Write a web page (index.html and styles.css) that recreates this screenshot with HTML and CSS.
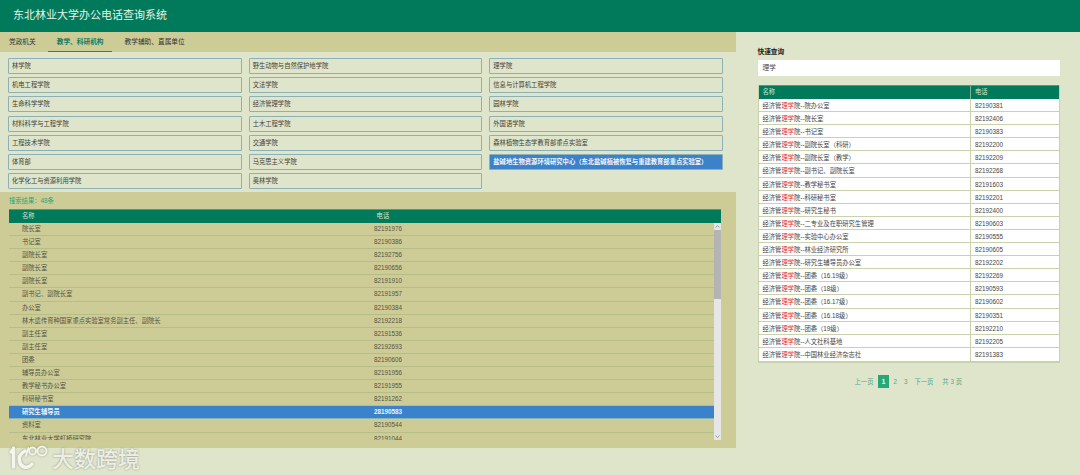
FILE: index.html
```html
<!DOCTYPE html>
<html lang="zh-CN">
<head>
<meta charset="utf-8">
<title>东北林业大学办公电话查询系统</title>
<link rel="stylesheet" href="styles.css">
</head>
<body>
<header class="top">东北林业大学办公电话查询系统</header>
<div class="page">
  <main class="left">
    <nav class="tabs">
      <a class="tab">党政机关</a>
      <a class="tab active">教学、科研机构</a>
      <a class="tab">教学辅助、直属单位</a>
    </nav>
    <section class="units">
      <a class="unit">林学院</a>
      <a class="unit">野生动物与自然保护地学院</a>
      <a class="unit">理学院</a>
      <a class="unit">机电工程学院</a>
      <a class="unit">文法学院</a>
      <a class="unit">信息与计算机工程学院</a>
      <a class="unit">生命科学学院</a>
      <a class="unit">经济管理学院</a>
      <a class="unit">园林学院</a>
      <a class="unit">材料科学与工程学院</a>
      <a class="unit">土木工程学院</a>
      <a class="unit">外国语学院</a>
      <a class="unit">工程技术学院</a>
      <a class="unit">交通学院</a>
      <a class="unit">森林植物生态学教育部重点实验室</a>
      <a class="unit">体育部</a>
      <a class="unit">马克思主义学院</a>
      <a class="unit selected">盐碱地生物资源环境研究中心（东北盐碱植被恢复与重建教育部重点实验室）</a>
      <a class="unit">化学化工与资源利用学院</a>
      <a class="unit">奥林学院</a>
    </section>
    <section class="results">
      <p class="count">搜索结果：48条</p>
      <div class="list-head"><span>名称</span><span class="list-head-tel">电话</span></div>
      <div class="list-body">
        <div class="list-rows">
          <div class="row"><span>院长室</span><span>82191976</span></div>
          <div class="row"><span>书记室</span><span>82190386</span></div>
          <div class="row"><span>副院长室</span><span>82192756</span></div>
          <div class="row"><span>副院长室</span><span>82190656</span></div>
          <div class="row"><span>副院长室</span><span>82191910</span></div>
          <div class="row"><span>副书记、副院长室</span><span>82191957</span></div>
          <div class="row"><span>办公室</span><span>82190384</span></div>
          <div class="row"><span>林木遗传育种国家重点实验室常务副主任、副院长</span><span>82192218</span></div>
          <div class="row"><span>副主任室</span><span>82191536</span></div>
          <div class="row"><span>副主任室</span><span>82192693</span></div>
          <div class="row"><span>团委</span><span>82190606</span></div>
          <div class="row"><span>辅导员办公室</span><span>82191956</span></div>
          <div class="row"><span>教学秘书办公室</span><span>82191955</span></div>
          <div class="row"><span>科研秘书室</span><span>82191262</span></div>
          <div class="row current"><span>研究生辅导员</span><span>28190583</span></div>
          <div class="row"><span>资料室</span><span>82190544</span></div>
          <div class="row"><span>东北林业大学虹桥研究院</span><span>82191044</span></div>
        </div>
        <div class="scrollbar">
          <svg class="arrow" viewBox="0 0 7 7"><path d="M1.5 4.5 3.5 2.5 5.5 4.5" fill="none" stroke="#8a8a8a" stroke-width=".8"/></svg>
          <div class="thumb"></div>
          <div class="track"></div>
          <svg class="arrow" viewBox="0 0 7 7"><path d="M1.5 2.5 3.5 4.5 5.5 2.5" fill="none" stroke="#8a8a8a" stroke-width=".8"/></svg>
        </div>
      </div>
    </section>
  </main>
  <aside class="right">
    <h2 class="quick">快速查询</h2>
    <div class="search">理学</div>
    <div class="table">
      <div class="thead"><span>名称</span><span>电话</span></div>
      <div class="trow"><span>经济管<em>理学</em>院--院办公室</span><span>82190381</span></div>
      <div class="trow"><span>经济管<em>理学</em>院--院长室</span><span>82192406</span></div>
      <div class="trow"><span>经济管<em>理学</em>院--书记室</span><span>82190383</span></div>
      <div class="trow"><span>经济管<em>理学</em>院--副院长室（科研）</span><span>82192200</span></div>
      <div class="trow"><span>经济管<em>理学</em>院--副院长室（教学）</span><span>82192209</span></div>
      <div class="trow"><span>经济管<em>理学</em>院--副书记、副院长室</span><span>82192268</span></div>
      <div class="trow"><span>经济管<em>理学</em>院--教学秘书室</span><span>82191603</span></div>
      <div class="trow"><span>经济管<em>理学</em>院--科研秘书室</span><span>82192201</span></div>
      <div class="trow"><span>经济管<em>理学</em>院--研究生秘书</span><span>82192400</span></div>
      <div class="trow"><span>经济管<em>理学</em>院--二专业及在职研究生管理</span><span>82190603</span></div>
      <div class="trow"><span>经济管<em>理学</em>院--实验中心办公室</span><span>82190555</span></div>
      <div class="trow"><span>经济管<em>理学</em>院--林业经济研究所</span><span>82190605</span></div>
      <div class="trow"><span>经济管<em>理学</em>院--研究生辅导员办公室</span><span>82192202</span></div>
      <div class="trow"><span>经济管<em>理学</em>院--团委（16.19级）</span><span>82192269</span></div>
      <div class="trow"><span>经济管<em>理学</em>院--团委（18级）</span><span>82190593</span></div>
      <div class="trow"><span>经济管<em>理学</em>院--团委（16.17级）</span><span>82190602</span></div>
      <div class="trow"><span>经济管<em>理学</em>院--团委（16.18级）</span><span>82190351</span></div>
      <div class="trow"><span>经济管<em>理学</em>院--团委（19级）</span><span>82192210</span></div>
      <div class="trow"><span>经济管<em>理学</em>院--人文社科基地</span><span>82192205</span></div>
      <div class="trow"><span>经济管<em>理学</em>院--中国林业经济杂志社</span><span>82191383</span></div>
    </div>
    <div class="pager">
      <a>上一页</a>
      <a class="page-on">1</a>
      <a class="page-num">2</a>
      <a class="page-num">3</a>
      <a>下一页</a>
      <a class="page-total">共 3 页</a>
    </div>
  </aside>
</div>
<div class="watermark">
  <svg class="wm-logo" viewBox="0 0 40 28" aria-hidden="true">
    <g fill="none" stroke="#f4f5ee" stroke-width="3.4" stroke-linecap="round">
      <path d="M5 7 3 9M5.500 5V24"/>
      <path d="M17 8C11.500 11 10 15 12 20C14 25 20 26 24 21"/>
      <path d="M18 13C18.500 10 19.500 7 20.500 5" stroke-width="1.800"/>
      <circle cx="24.500" cy="8" r="3.500" stroke-width="1.800"/>
      <circle cx="34" cy="8" r="4.500" stroke-width="1.800"/>
    </g>
  </svg>
  <span class="wm-text">大数跨境</span>
</div>
</body>
</html>
```
FILE: styles.css
```css
* { box-sizing: border-box; }
html, body { margin: 0; height: 475px; overflow: hidden; }
body {
  position: relative;
  background: #dfe5cb;
  color: #3a3a30;
  font: 6.3px/1 "Liberation Sans", "Noto Sans CJK SC", sans-serif;
}
.top {
  height: 32px;
  padding: 9px 0 0 13px;
  background: #007a5a;
  color: #e6f2e8;
  font-size: 11px;
  line-height: 13px;
  font-family: "Liberation Serif", "Noto Sans CJK SC", serif;
}
.page { display: flex; align-items: flex-start; }
.left { width: 735.5px; flex: none; }
.tabs {
  display: flex;
  gap: 4px;
  height: 20px;
  padding-left: .5px;
  background: #cdcc97;
}
.tab {
  height: 20px;
  padding: 0 8.500px;
  line-height: 19px;
  font-size: 6.700px;
  color: #333;
}
.tab.active {
  color: #157a5c;
  font-weight: bold;
  border-bottom: 1px solid #1f8a68;
}
.units {
  display: grid;
  grid-template-columns: repeat(3, 233.670px);
  grid-auto-rows: 16px;
  gap: 3.200px 7px;
  height: 140px;
  padding: 6px 0 0 8px;
}
.unit {
  padding-left: 3px;
  border: 1px solid #8db0b4;
  border-radius: 1px;
  line-height: 14px;
  color: #3f4036;
}
.unit.selected {
  border-color: #8db0b4;
  background: #3c82ca;
  color: #f2f6fa;
  font-weight: bold;
}
.results {
  height: 256px;
  padding: 0 15px 0 9px;
  background: #cdcc97;
}
.count {
  height: 17px;
  margin: 0;
  padding-top: 5px;
  color: #25a878;
  font-size: 6.300px;
  line-height: 7px;
}
.list-head {
  display: flex;
  height: 14px;
  padding-left: 13px;
  background: #007a5a;
  border-top: 1px solid #4e9c7b;
  color: #cfe6d4;
  line-height: 12px;
}
.list-head-tel { margin-left: 342px; }
.list-body { display: flex; height: 217px; overflow: hidden; }
.list-rows { flex: 1; }
.row {
  display: grid;
  grid-template-columns: 352px 1fr;
  height: 13.100px;
  padding-left: 13px;
  border-bottom: 1px solid #b6bd87;
  line-height: 12.500px;
  color: #55533f;
}
.row.current {
  background: #3c82ca;
  color: #eef4fa;
  font-weight: bold;
  border-bottom-color: #84b8b8;
}
.scrollbar {
  display: flex;
  flex-direction: column;
  flex: none;
  width: 7px;
  background: #e6e6e6;
}
.arrow { display: block; width: 7px; height: 7px; flex: none; }
.thumb { height: 69px; flex: none; background: #b4b4b4; }
.track { flex: 1; }
.right { flex: 1; padding: 0 20px 0 22px; }
.quick {
  height: 28px;
  margin: 0;
  padding-top: 15.500px;
  color: #222;
  font-size: 6.700px;
  line-height: 8px;
  font-weight: bold;
}
.search {
  height: 16px;
  padding-left: 5px;
  background: #fff;
  color: #444;
  font-size: 6.700px;
  line-height: 16px;
}
.table {
  margin-top: 9px;
  background: #fff;
  border: 1px solid #c9d2ad;
  border-top: 0;
  border-bottom: 2px solid #c9d2ad;
}
.thead, .trow {
  display: grid;
  grid-template-columns: 211.500px 1fr;
  color: #444;
}
.thead span, .trow span { padding-left: 4px; }
.thead {
  height: 14px;
  background: #007a5a;
  border-top: 1px solid #4e9c7b;
  color: #cfe6d4;
  line-height: 11.500px;
}
.thead span + span { border-left: 1px solid #7fb09a; }
.trow {
  height: 13.100px;
  border-bottom: 1px solid #c9d2ad;
  line-height: 13px;
}
.trow:last-child { border-bottom: 0; }
.trow span + span { border-left: 1px solid #c9d2ad; }
em { color: #e8262c; font-style: normal; }
.pager {
  display: flex;
  justify-content: center;
  align-items: center;
  gap: 4.500px;
  height: 13px;
  margin-top: 12.500px;
  padding-right: 1px;
  color: #55a986;
}
.page-on {
  width: 11px;
  height: 13px;
  background: #27a878;
  color: #fff;
  font-weight: bold;
  line-height: 13px;
  text-align: center;
}
.page-num { margin-right: 2.500px; }
.page-total { margin-left: 4.500px; }
.watermark {
  position: absolute;
  left: 8px;
  top: 443px;
  display: flex;
  align-items: center;
  gap: 4px;
  height: 28px;
}
.wm-logo { display: block; width: 40px; height: 28px; filter: drop-shadow(0 0 1px rgba(0,0,0,.3)); }
.wm-text {
  color: rgba(246,247,240,.92);
  font-family: "Noto Sans CJK SC", sans-serif;
  font-size: 22px;
  font-weight: 500;
  line-height: 28px;
  text-shadow: 0 0 2px rgba(0,0,0,.4);
}
```
